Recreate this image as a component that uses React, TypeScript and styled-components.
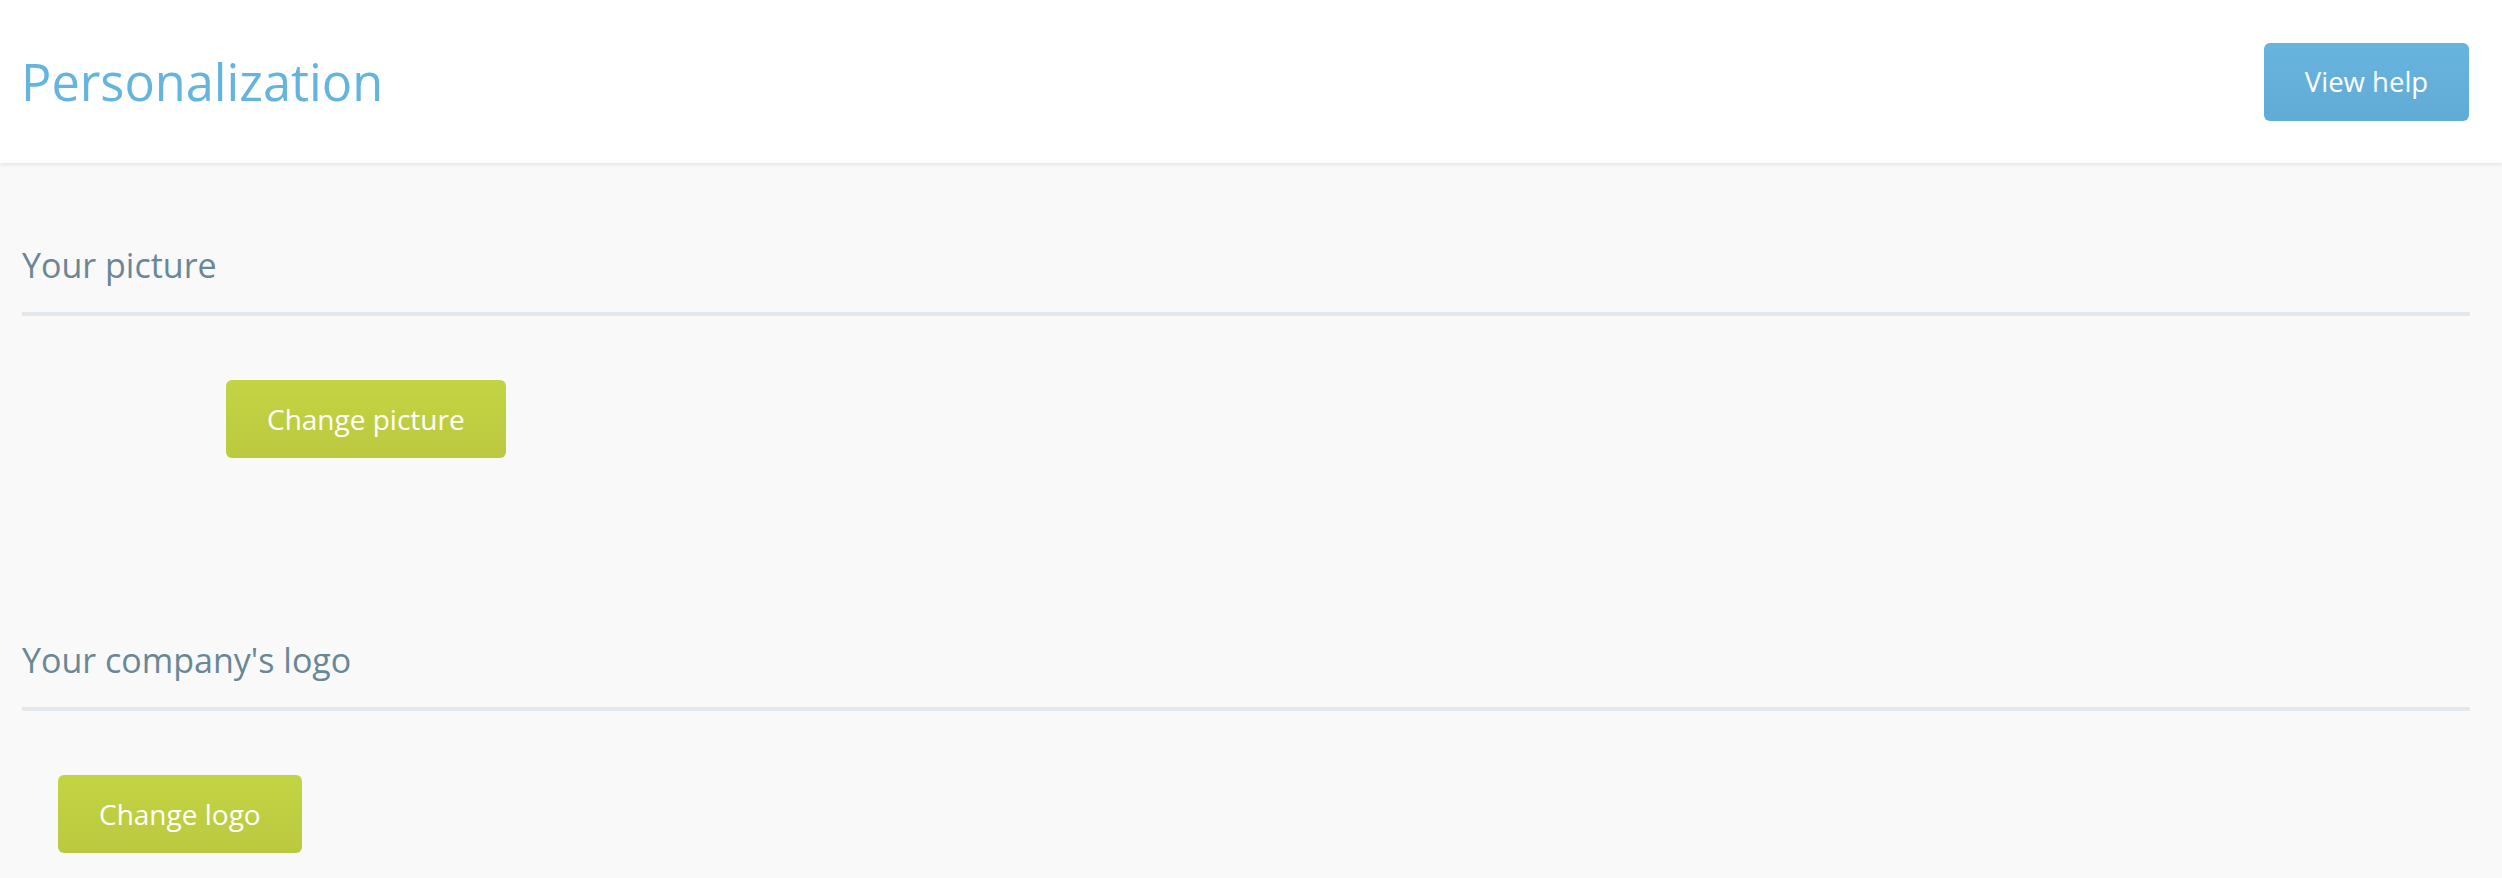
import React from 'react'
import styled, { createGlobalStyle } from 'styled-components'

const GlobalStyle = createGlobalStyle`
    html, body {
        margin:0;
        padding:0;
        background:#f9f9f9;
        font-family:"Open Sans", "Noto Sans", sans-serif;
    }
`

const App = () => {
  return (
    <Page>
        <GlobalStyle />
        <Header>
            <Title>Personalization</Title>
            <HelpButton>View help</HelpButton>
        </Header>
        <Content>
            <Section>
                <SectionTitle>Your picture</SectionTitle>
                <SectionBody indent='204px' minHeight='322px'>
                    <GreenButton>Change picture</GreenButton>
                </SectionBody>
            </Section>
            <Section>
                <SectionTitle>Your company's logo</SectionTitle>
                <SectionBody indent='36px'>
                    <GreenButton>Change logo</GreenButton>
                </SectionBody>
            </Section>
        </Content>
    </Page>
  )
}

export default App

const Page = styled.div`
    min-height:100vh;
    background:#f9f9f9;
`

const Header = styled.header`
    height:163px;
    box-sizing:border-box;
    background:#fff;
    display:flex;
    align-items:center;
    justify-content:space-between;
    padding:0 33px 0 21px;
    box-shadow:0 2px 4px rgba(0,0,0,0.08);
    position:relative;
`

const Title = styled.h1`
    margin:0;
    font-size:50.5px;
    font-weight:400;
    color:#63b4df;
    line-height:1;
    padding-top:2px;
`

const HelpButton = styled.button`
    width:205px;
    height:78px;
    border:none;
    border-radius:6px;
    background:linear-gradient(#67b4df, #61acd7);
    color:#fff;
    font-family:inherit;
    font-size:27.5px;
    cursor:pointer;
`

const Content = styled.main`
    padding:80px 32px 0 22px;
`

const Section = styled.section`
    display:flex;
    flex-direction:column;
`

const SectionTitle = styled.h2`
    margin:0;
    font-size:34px;
    font-weight:400;
    line-height:44px;
    color:#6a8796;
    padding-bottom:25px;
    border-bottom:4px solid #e3e8ec;
`

const SectionBody = styled.div<{indent:string, minHeight?:string}>`
    display:flex;
    align-items:flex-start;
    padding:64px 0 0 ${p=>p.indent};
    min-height:${p=>p.minHeight || 'auto'};
    box-sizing:border-box;
`

const GreenButton = styled.button`
    height:78px;
    padding:0 41px;
    border:none;
    border-radius:6px;
    background:linear-gradient(#c3d443, #bbc93f);
    color:#fff;
    font-family:inherit;
    font-size:28px;
    cursor:pointer;
`
